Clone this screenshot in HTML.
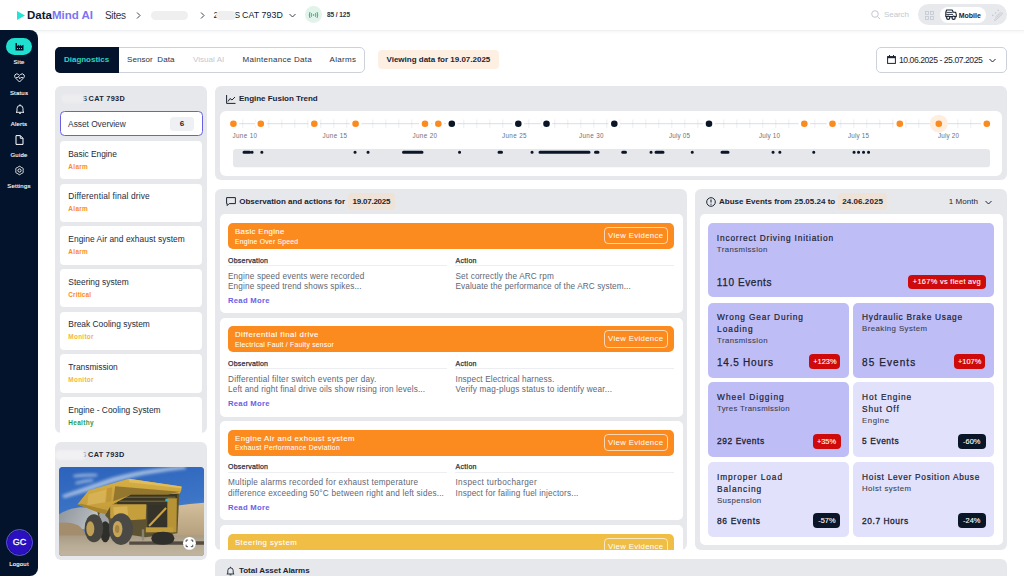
<!DOCTYPE html>
<html><head><meta charset="utf-8">
<style>
*{box-sizing:border-box;margin:0;padding:0}
html,body{width:1024px;height:576px;overflow:hidden;background:#fff;font-family:"Liberation Sans",sans-serif;color:#0e1a2e}
.a{position:absolute}
.t{position:absolute;white-space:nowrap;line-height:1}
#top{position:absolute;left:0;top:0;width:1024px;height:30.5px;background:#fff;border-bottom:1px solid #eef0f2;box-shadow:0 1px 3px rgba(20,30,50,0.05)}
#side{position:absolute;left:0;top:30px;width:38.3px;height:546px;background:#03132b;border-radius:0 8px 8px 0}
.nl{position:absolute;left:0;width:38px;text-align:center;color:#fff;font-size:6px;line-height:1;letter-spacing:0.2px;-webkit-text-stroke:0.12px #fff}
.panel{position:absolute;background:#e7e8ec;border-radius:6px;overflow:hidden}
.card{position:absolute;background:#fff;border-radius:4px}
.lc{position:absolute;left:5px;width:142px;height:38.5px;background:#fff;border-radius:4px}
.lc .n{position:absolute;left:8px;top:8.9px;font-size:8.4px;color:#222c3c;white-space:nowrap;line-height:1}
.lc .s{position:absolute;left:8px;top:22.8px;font-size:6.4px;font-weight:bold;white-space:nowrap;line-height:1}
</style></head><body>

<!-- TOP BAR -->
<div id="top">
  <svg class="a" style="left:17px;top:11px" width="8" height="9" viewBox="0 0 8 9"><path d="M0 0L8 4.5L0 9Z" fill="#22e5d6"></path></svg>
  <div class="t" style="left: 27px; top: 10px; font-size: 11.5px; font-weight: bold; letter-spacing: -0.003px;"><span style="color:#0e1a2e">Data</span><span style="color:#7b75f2">Mind AI</span></div>
  <div class="t" style="left: 105px; top: 11px; font-size: 10px; color: rgb(43, 52, 69); letter-spacing: -0.309px;">Sites</div>
  <svg class="a" style="left:136px;top:12px" width="5" height="7" viewBox="0 0 5 7"><path d="M1 0.5L4 3.5L1 6.5" fill="none" stroke="#3a4352" stroke-width="1"></path></svg>
  <div class="a" style="left:150.8px;top:10.8px;width:37.3px;height:9.2px;border-radius:5px;background:#efefef;filter:blur(0.6px)"></div>
  <svg class="a" style="left:200px;top:12px" width="5" height="7" viewBox="0 0 5 7"><path d="M1 0.5L4 3.5L1 6.5" fill="none" stroke="#3a4352" stroke-width="1"></path></svg>
  <div class="t" style="left: 213.5px; top: 11.2px; font-size: 8.8px; color: rgb(14, 26, 46); letter-spacing: -0.306px;">2</div><div class="t" style="left: 234.3px; top: 11.2px; font-size: 8.8px; color: rgb(14, 26, 46); letter-spacing: -1.275px;">S</div><div class="a" style="left:216.4px;top:10.8px;width:20px;height:9.4px;border-radius:5px;background:#efefef;filter:blur(0.6px)"></div>
  <div class="t" style="left: 242.1px; top: 11.2px; font-size: 8.8px; color: rgb(14, 26, 46); letter-spacing: 0.062px;">CAT 793D</div>
  <svg class="a" style="left:289px;top:13px" width="7" height="5" viewBox="0 0 7 5"><path d="M0.5 1L3.5 4L6.5 1" fill="none" stroke="#3a4352" stroke-width="1"></path></svg>
  <div class="a" style="left:305px;top:6.4px;width:17px;height:17px;border-radius:50%;background:#e1f3ea"></div>
  <svg class="a" style="left:308px;top:11px" width="11" height="8" viewBox="0 0 11 8"><path d="M2 1Q0.5 4 2 7M9 1Q10.5 4 9 7M3.6 2.2Q2.8 4 3.6 5.8M7.4 2.2Q8.2 4 7.4 5.8" fill="none" stroke="#2aa86a" stroke-width="0.9"></path><circle cx="5.5" cy="4" r="0.8" fill="#2aa86a"></circle></svg>
  <div class="t" style="left: 327px; top: 11.5px; font-size: 6.5px; font-weight: bold; color: rgb(43, 52, 69); letter-spacing: -0.071px;">85 / 125</div>

  <svg class="a" style="left:871px;top:10px" width="10" height="10" viewBox="0 0 10 10"><circle cx="4" cy="4" r="3.3" fill="none" stroke="#c3c8d0" stroke-width="1"></circle><path d="M6.5 6.5L9 9" stroke="#c3c8d0" stroke-width="1"></path></svg>
  <div class="t" style="left: 884px; top: 10.5px; font-size: 8px; color: rgb(195, 200, 208); letter-spacing: -0.072px;">Search</div>
  <div class="a" style="left:918px;top:4px;width:89px;height:21px;border-radius:11px;background:#e8e9ed"></div>
  <svg class="a" style="left:925px;top:10.5px" width="9" height="9" viewBox="0 0 9 9"><rect x="0.5" y="0.5" width="3" height="3" fill="none" stroke="#c3c8d0" stroke-width="0.8"></rect><rect x="5.5" y="0.5" width="3" height="3" fill="none" stroke="#c3c8d0" stroke-width="0.8"></rect><rect x="0.5" y="5.5" width="3" height="3" fill="none" stroke="#c3c8d0" stroke-width="0.8"></rect><rect x="5.5" y="5.5" width="3" height="3" fill="none" stroke="#c3c8d0" stroke-width="0.8"></rect></svg>
  <div class="a" style="left:940px;top:6.5px;width:46px;height:16.5px;border-radius:8px;background:#fff"></div>
  <svg class="a" style="left:945px;top:9.3px" width="12" height="11" viewBox="0 0 12 11"><path d="M0.8 3.2L1.6 1H7.2L8.2 3.2H10.6L11.3 5.6V7.6H0.8Z" fill="none" stroke="#1b2433" stroke-width="1.1" stroke-linejoin="round"></path><path d="M1.5 3.4H7.5M1.2 5.4H8" stroke="#1b2433" stroke-width="0.9"></path><circle cx="3.2" cy="8.7" r="1.6" fill="#fff" stroke="#1b2433" stroke-width="1.2"></circle><circle cx="8.6" cy="8.7" r="1.6" fill="#fff" stroke="#1b2433" stroke-width="1.2"></circle></svg>
  <div class="t" style="left: 958.8px; top: 11.6px; font-size: 7px; font-weight: bold; color: rgb(27, 36, 51); letter-spacing: -0.034px;">Mobile</div>
  <svg class="a" style="left:990.5px;top:9.3px" width="12" height="12" viewBox="0 0 12 12"><path d="M3.2 11L10.8 3.6Q11.6 4.2 11.4 5L4.2 11.6Q3.6 11.8 3.2 11Z" fill="none" stroke="#c3c8d0" stroke-width="0.8"></path><path d="M4 8.4L9.5 3M6 6.8L7 7.8M7.6 5.2L8.4 6" stroke="#c3c8d0" stroke-width="0.7"></path><circle cx="1.8" cy="6.4" r="0.8" fill="#c3c8d0"></circle><circle cx="4.6" cy="4" r="0.8" fill="#c3c8d0"></circle><circle cx="7.2" cy="1.2" r="0.8" fill="#c3c8d0"></circle></svg>
</div>

<!-- SIDEBAR -->
<div id="side"></div>
<div class="a" style="left:6px;top:38px;width:26px;height:17px;border-radius:9px;background:#1fe0cf"></div>
<svg class="a" style="left:14.5px;top:42px" width="9" height="9" viewBox="0 0 9 9"><path d="M0.5 8.5V1H2V4L4 2.8V4L6 2.8V4L8.5 2.8V8.5Z" fill="#03132b"></path><rect x="2" y="6" width="1" height="1" fill="#1fe0cf"></rect><rect x="4" y="6" width="1" height="1" fill="#1fe0cf"></rect><rect x="6" y="6" width="1" height="1" fill="#1fe0cf"></rect></svg>
<div class="nl" style="top:58.8px">Site</div>
<svg class="a" style="left:14px;top:72.5px" width="11" height="10" viewBox="0 0 11 10"><path d="M5.5 9L1.3 4.8Q0 3.2 1 1.8Q2.6 0 4.3 1.4L5.5 2.4L6.7 1.4Q8.4 0 10 1.8Q11 3.2 9.7 4.8Z" fill="none" stroke="#fff" stroke-width="0.9"></path><path d="M2 4.5H3.8L4.6 3.3L5.8 5.8L6.8 4.5H9" fill="none" stroke="#fff" stroke-width="0.8"></path></svg>
<div class="nl" style="top:89.8px">Status</div>
<svg class="a" style="left:14.5px;top:104px" width="10" height="10" viewBox="0 0 10 10"><path d="M2 7.5V4.5Q2 1.5 5 1.5Q8 1.5 8 4.5V7.5L9 8.3H1Z" fill="none" stroke="#fff" stroke-width="0.9"></path><path d="M4 9.3H6" stroke="#fff" stroke-width="0.9"></path><path d="M5 0.3V1.5" stroke="#fff" stroke-width="0.9"></path></svg>
<div class="nl" style="top:120.8px">Alerts</div>
<svg class="a" style="left:15px;top:135px" width="9" height="10" viewBox="0 0 9 10"><path d="M1 0.6H5.3L8 3.3V9.4H1Z" fill="none" stroke="#fff" stroke-width="1"></path><path d="M5.3 0.6V3.3H8" fill="none" stroke="#fff" stroke-width="0.9"></path></svg>
<div class="nl" style="top:151.8px">Guide</div>
<svg class="a" style="left:13.7px;top:165px" width="11" height="11" viewBox="0 0 11 11"><path d="M6.38 1.68Q5.50 0.90 4.62 1.68Q3.75 2.47 2.63 2.83Q1.52 3.20 1.76 4.35Q2.00 5.50 1.76 6.65Q1.52 7.80 2.63 8.17Q3.75 8.53 4.62 9.32Q5.50 10.10 6.37 9.32Q7.25 8.53 8.37 8.17Q9.48 7.80 9.24 6.65Q9.00 5.50 9.24 4.35Q9.48 3.20 8.37 2.83Q7.25 2.47 6.38 1.68Z" fill="none" stroke="#fff" stroke-width="0.9"></path><circle cx="5.5" cy="5.5" r="1.6" fill="none" stroke="#fff" stroke-width="0.9"></circle></svg>
<div class="nl" style="top:182.8px">Settings</div>
<div class="a" style="left:5.9px;top:528.7px;width:27px;height:27px;border-radius:50%;background:#2a10c0;border:1px solid #5d54e8;box-shadow:inset 0 0 0 0.8px #1c1a6a"></div>
<div class="t" style="left: 5.9px; top: 538.2px; width: 27px; text-align: center; font-size: 9px; color: rgb(255, 255, 255); -webkit-text-stroke: 0.3px rgb(255, 255, 255); letter-spacing: 0px;">GC</div>
<div class="nl" style="top:560.5px">Logout</div>

<!-- TABS -->
<div class="a" style="left:55px;top:47px;width:310px;height:25.5px;border:1px solid #cdd2da;border-radius:5px;background:#fff"></div>
<div class="a" style="left:55px;top:47px;width:63.5px;height:25.5px;border-radius:5px 0 0 5px;background:#03132b"></div>
<div class="t" style="left: 64px; top: 56px; font-size: 8px; font-weight: bold; color: rgb(42, 211, 195); letter-spacing: -0.024px;">Diagnostics</div>
<div class="t" style="left: 127px; top: 56px; font-size: 8px; color: rgb(43, 52, 69); letter-spacing: 0.072px;">Sensor&nbsp; Data</div>
<div class="t" style="left: 193px; top: 56px; font-size: 8px; color: rgb(195, 200, 208); letter-spacing: 0.039px;">Visual AI</div>
<div class="t" style="left: 242.5px; top: 56px; font-size: 8px; color: rgb(43, 52, 69); letter-spacing: 0.284px;">Maintenance Data</div>
<div class="t" style="left: 329.5px; top: 56px; font-size: 8px; color: rgb(43, 52, 69); letter-spacing: 0.342px;">Alarms</div>
<div class="a" style="left:378px;top:50px;width:121px;height:18.5px;border-radius:4px;background:#fdf0e3"></div>
<div class="t" style="left: 386.5px; top: 56px; font-size: 8px; font-weight: bold; color: rgb(27, 36, 51); letter-spacing: -0.004px;">Viewing data for 19.07.2025</div>

<div class="a" style="left:876px;top:47px;width:131px;height:25.5px;border:1px solid #cdd2da;border-radius:5px;background:#fff"></div>
<svg class="a" style="left:886.5px;top:55px" width="9" height="9" viewBox="0 0 9 9"><rect x="0.6" y="1.6" width="7.8" height="6.8" fill="none" stroke="#1b2433" stroke-width="1"></rect><rect x="0.6" y="1.6" width="7.8" height="1.6" fill="#1b2433"></rect><path d="M2.5 0V2M6.5 0V2" stroke="#1b2433" stroke-width="1"></path></svg>
<div class="t" style="left: 899px; top: 56px; font-size: 8.6px; color: rgb(27, 36, 51); letter-spacing: -0.451px;">10.06.2025 - 25.07.2025</div>
<svg class="a" style="left:988.5px;top:58px" width="7" height="5" viewBox="0 0 7 5"><path d="M0.5 1L3.5 4L6.5 1" fill="none" stroke="#1b2433" stroke-width="1"></path></svg>

<!-- LEFT PANEL -->
<div class="panel" style="left:55.3px;top:85.5px;width:151.3px;height:347px">
  <div class="t" style="left: 27px; top: 9.1px; font-size: 7.3px; font-weight: bold; color: rgb(27, 36, 51); letter-spacing: -0.275px;">S</div><div class="a" style="left:5.9px;top:8px;width:24.3px;height:9.7px;border-radius:5px;background:#ededef;filter:blur(0.8px)"></div>
  <div class="t" style="left: 33.25px; top: 9.1px; font-size: 7.3px; font-weight: bold; color: rgb(27, 36, 51); letter-spacing: 0.316px;">CAT 793D</div>
  <div class="a" style="left:4.5px;top:25.6px;width:143px;height:25.3px;border:1.3px solid #6760e2;border-radius:4.5px;background:#fff"></div>
  <div class="t" style="left: 12.8px; top: 34.2px; font-size: 8.4px; color: rgb(43, 52, 69); letter-spacing: -0.037px;">Asset Overview</div>
  <div class="a" style="left:114.8px;top:31px;width:23.8px;height:14.8px;border-radius:3.5px;background:#eff0f3"></div>
  <div class="t" style="left: 114.8px; top: 34.6px; width: 23.8px; text-align: center; font-size: 8px; font-weight: bold; color: rgb(27, 36, 51); letter-spacing: 0px;">6</div>
  <div class="lc" style="top:55.3px"><div class="n" style="letter-spacing: -0.026px;">Basic Engine</div><div class="s" style="color: rgb(251, 138, 34); letter-spacing: 0.344px;">Alarm</div></div>
  <div class="lc" style="top:98.0px"><div class="n" style="letter-spacing: 0.149px;">Differential final drive</div><div class="s" style="color: rgb(251, 138, 34); letter-spacing: 0.344px;">Alarm</div></div>
  <div class="lc" style="top:140.7px"><div class="n" style="letter-spacing: 0.054px;">Engine Air and exhaust system</div><div class="s" style="color: rgb(251, 138, 34); letter-spacing: 0.344px;">Alarm</div></div>
  <div class="lc" style="top:183.4px"><div class="n" style="letter-spacing: 0.032px;">Steering system</div><div class="s" style="color: rgb(251, 138, 34); letter-spacing: 0.154px;">Critical</div></div>
  <div class="lc" style="top:226.1px"><div class="n" style="letter-spacing: 0.002px;">Break Cooling system</div><div class="s" style="color: rgb(241, 183, 58); letter-spacing: 0.302px;">Monitor</div></div>
  <div class="lc" style="top:268.8px"><div class="n" style="letter-spacing: 0px;">Transmission</div><div class="s" style="color: rgb(241, 183, 58); letter-spacing: 0.302px;">Monitor</div></div>
  <div class="lc" style="top:311.5px"><div class="n" style="letter-spacing: 0.004px;">Engine - Cooling System</div><div class="s" style="color: rgb(31, 154, 82); letter-spacing: 0.351px;">Healthy</div></div>
</div>

<!-- IMAGE PANEL -->
<div class="panel" style="left:55.3px;top:441.5px;width:151.3px;height:118px">
  <div class="t" style="left: 26px; top: 9.3px; font-size: 7.3px; font-weight: bold; color: rgb(27, 36, 51); letter-spacing: -0.275px;">S</div><div class="a" style="left:-0.3px;top:8.6px;width:31.3px;height:10px;border-radius:5px;background:#f1f1f3;filter:blur(0.8px)"></div>
  <div class="t" style="left: 32.8px; top: 9.3px; font-size: 7.3px; font-weight: bold; color: rgb(27, 36, 51); letter-spacing: 0.316px;">CAT 793D</div>
  <div class="a" id="truck" style="left:4px;top:25.5px;width:144.5px;height:88.5px;border-radius:4px;overflow:hidden;background:#3a6fc0"><svg width="145" height="89" viewBox="0 0 144.5 88.5" style="position:absolute;left:0;top:0">
<defs>
<linearGradient id="sky" x1="0" y1="0" x2="0.25" y2="1"><stop offset="0" stop-color="#2c62bb"></stop><stop offset="0.55" stop-color="#3c75c6"></stop><stop offset="1" stop-color="#6a99d2"></stop></linearGradient>
<linearGradient id="gnd" x1="0" y1="0" x2="0" y2="1"><stop offset="0" stop-color="#a89b85"></stop><stop offset="0.5" stop-color="#b8ac96"></stop><stop offset="1" stop-color="#c2b5a0"></stop></linearGradient>
<linearGradient id="hill" x1="0" y1="0" x2="0" y2="1"><stop offset="0" stop-color="#d3c09d"></stop><stop offset="1" stop-color="#b29b78"></stop></linearGradient>
<linearGradient id="mtn" x1="0" y1="0" x2="1" y2="0.3"><stop offset="0" stop-color="#8d949a"></stop><stop offset="0.7" stop-color="#aeb3b8"></stop><stop offset="1" stop-color="#d5d8da"></stop></linearGradient>
<linearGradient id="bed" x1="0" y1="0" x2="0" y2="1"><stop offset="0" stop-color="#d6ae45"></stop><stop offset="1" stop-color="#c29a3a"></stop></linearGradient>
<filter id="b1" x="-30%" y="-80%" width="160%" height="260%"><feGaussianBlur stdDeviation="1.6"></feGaussianBlur></filter>
<filter id="b2" x="-5%" y="-5%" width="110%" height="110%"><feGaussianBlur stdDeviation="0.5"></feGaussianBlur></filter>
</defs>
<rect width="144.5" height="88.5" fill="url(#sky)"></rect>
<g filter="url(#b1)" fill="#b9cde8" opacity="0.8">
<path d="M3 28Q25 20 48 12Q80 2 125 -1L127 2Q85 6 52 16Q30 24 5 31Z"></path>
<path d="M14 8Q28 6 38 7L38 9Q28 9 15 10Z"></path>
<path d="M16 15Q26 12 34 12L34 14Q26 15 17 17Z"></path>
</g>
<g filter="url(#b2)">
<path d="M0 47Q10 41 21 40Q31 40 40 44L44 62L0 62Z" fill="url(#mtn)"></path>
<path d="M117 38.6Q130 36.5 144.5 35.5L144.5 72.6L112 72.6Z" fill="url(#hill)"></path>
<path d="M0 55.5Q12 54 19 58Q25 62 27 68.5L0 68.5Z" fill="#a48d6d"></path>
<rect x="0" y="68" width="144.5" height="20.5" fill="url(#gnd)"></rect>
<path d="M70 74.2L144.5 73.8L144.5 77.3L70 77.5Z" fill="#3a3630" opacity="0.8"></path>
<!-- truck body -->
<path d="M38 44L52 39L53 60L42 60Z" fill="#5e5231"></path>
<path d="M40 47Q43 42 48 42L50 56L42 58Z" fill="#9ea3a7"></path>
<path d="M50 27L120 24L118 66L86 70L62 66L46 48Z" fill="#5d5230"></path>
<path d="M58 26.5L118 26L117 37L58 38Z" fill="#3a3628"></path>
<path d="M60 30H116M60 34H116" stroke="#b8963a" stroke-width="0.7" opacity="0.8"></path>
<path d="M51 37L87 37L86.5 52L70 53L51 51Z" fill="#c69f3c"></path>
<path d="M54 40L68 39L69 50L55 49Z" fill="#d9b65a" opacity="0.8"></path>
<path d="M88 37L108 37L108 61L88 61Z" fill="#34322c"></path>
<path d="M89 58L106 40L107.5 41.5L90.5 59.5Z" fill="#c9a33f"></path>
<path d="M108 31L117.5 31L117 65L108 65Z" fill="#b79334"></path>
<path d="M86.5 60H114V65H86.5Z" fill="#c19c3b"></path>
<rect x="106" y="31.5" width="3" height="2.5" fill="#35b9d2"></rect>
<!-- dump bed -->
<path d="M18.5 37L29.4 23.2L69.5 11.6L122 19.3L122 22.5L120.5 26.3L108 27L72 27L52 38L46.4 47L36 44Z" fill="url(#bed)"></path>
<path d="M29.5 27L47 22.5L46 35L28 38Z" fill="#dab75c" opacity="0.75"></path>
<path d="M48 21L53 20L52 34L47 35Z" fill="#bb9434" opacity="0.8"></path>
<path d="M69.5 11.6L122 19.3L122 21L70 15Z" fill="#e0bd5c"></path>
<path d="M56 19L120.5 24.5L108 27.5L72 27.5L54 34Z" fill="#8a6f2b" opacity="0.85"></path>
<path d="M18.5 37L36 44L46.4 47L48 43L22 36.5Z" fill="#a9852f"></path>
<!-- tires -->
<ellipse cx="46.1" cy="64.5" rx="5" ry="10.5" fill="#2e2d2a"></ellipse>
<ellipse cx="34.8" cy="61" rx="9.3" ry="14" fill="#46453f"></ellipse>
<ellipse cx="31.2" cy="61.4" rx="4" ry="7.4" fill="#bf9f55"></ellipse>
<ellipse cx="61.8" cy="61.8" rx="12" ry="15.8" fill="#4b4a45"></ellipse>
<ellipse cx="58.4" cy="61.8" rx="4.8" ry="8.2" fill="#c6a55a"></ellipse>
<ellipse cx="58" cy="61.8" rx="2.2" ry="4" fill="#a4843f"></ellipse>
<path d="M92 71Q92 64.5 103.6 64.5Q115 64.5 115 71Q115 77.5 103.6 77.5Q92 77.5 92 71Z" fill="#2f2e2a"></path>
<rect x="82.5" y="62" width="2.4" height="11" fill="#8e8a7a" opacity="0.85"></rect>
</g>
<circle cx="130" cy="76" r="6.4" fill="#fff"></circle>
<path d="M126.7 74.6V72.7H128.6M131.4 72.7H133.3V74.6M133.3 77.4V79.3H131.4M128.6 79.3H126.7V77.4" fill="none" stroke="#1b2433" stroke-width="0.8"></path>
</svg>


</div>
</div>

<!-- ENGINE FUSION PANEL -->
<div class="panel" style="left:215px;top:85.5px;width:791.5px;height:94px">
  <svg class="a" style="left:11.00px;top:9px" width="10" height="9" viewBox="0 0 10 9"><path d="M0.6 0V8.4H9.5" fill="none" stroke="#1b2433" stroke-width="1"></path><path d="M2 6.5L4 3.5L6 5L9 2" fill="none" stroke="#1b2433" stroke-width="1"></path></svg>
  <div class="t" style="left: 24px; top: 9px; font-size: 8px; font-weight: bold; color: rgb(27, 36, 51); letter-spacing: -0.021px;">Engine Fusion Trend</div>
  <div class="card" style="left:5.00px;top:25.7px;width:782.3px;height:64.5px;border-radius:6px"></div>
</div>

<!-- TIMELINE -->
<svg class="a" style="left:0;top:0" width="1024" height="180" viewBox="0 0 1024 180">
  <g stroke="#dfe2e7" stroke-width="0.6"><line x1="242.8" y1="119.5" x2="242.8" y2="128"></line><line x1="255.8" y1="119.5" x2="255.8" y2="128"></line><line x1="268.8" y1="119.5" x2="268.8" y2="128"></line><line x1="281.8" y1="119.5" x2="281.8" y2="128"></line><line x1="294.8" y1="119.5" x2="294.8" y2="128"></line><line x1="307.8" y1="119.5" x2="307.8" y2="128"></line><line x1="320.8" y1="119.5" x2="320.8" y2="128"></line><line x1="333.8" y1="119.5" x2="333.8" y2="128"></line><line x1="346.8" y1="119.5" x2="346.8" y2="128"></line><line x1="359.8" y1="119.5" x2="359.8" y2="128"></line><line x1="372.8" y1="119.5" x2="372.8" y2="128"></line><line x1="385.8" y1="119.5" x2="385.8" y2="128"></line><line x1="398.8" y1="119.5" x2="398.8" y2="128"></line><line x1="411.8" y1="119.5" x2="411.8" y2="128"></line><line x1="424.8" y1="119.5" x2="424.8" y2="128"></line><line x1="437.8" y1="119.5" x2="437.8" y2="128"></line><line x1="450.8" y1="119.5" x2="450.8" y2="128"></line><line x1="463.8" y1="119.5" x2="463.8" y2="128"></line><line x1="476.8" y1="119.5" x2="476.8" y2="128"></line><line x1="489.8" y1="119.5" x2="489.8" y2="128"></line><line x1="502.8" y1="119.5" x2="502.8" y2="128"></line><line x1="515.8" y1="119.5" x2="515.8" y2="128"></line><line x1="528.8" y1="119.5" x2="528.8" y2="128"></line><line x1="541.8" y1="119.5" x2="541.8" y2="128"></line><line x1="554.8" y1="119.5" x2="554.8" y2="128"></line><line x1="567.8" y1="119.5" x2="567.8" y2="128"></line><line x1="580.8" y1="119.5" x2="580.8" y2="128"></line><line x1="593.8" y1="119.5" x2="593.8" y2="128"></line><line x1="606.8" y1="119.5" x2="606.8" y2="128"></line><line x1="619.8" y1="119.5" x2="619.8" y2="128"></line><line x1="632.8" y1="119.5" x2="632.8" y2="128"></line><line x1="645.8" y1="119.5" x2="645.8" y2="128"></line><line x1="658.8" y1="119.5" x2="658.8" y2="128"></line><line x1="671.8" y1="119.5" x2="671.8" y2="128"></line><line x1="684.8" y1="119.5" x2="684.8" y2="128"></line><line x1="697.8" y1="119.5" x2="697.8" y2="128"></line><line x1="710.8" y1="119.5" x2="710.8" y2="128"></line><line x1="723.8" y1="119.5" x2="723.8" y2="128"></line><line x1="736.8" y1="119.5" x2="736.8" y2="128"></line><line x1="749.8" y1="119.5" x2="749.8" y2="128"></line><line x1="762.8" y1="119.5" x2="762.8" y2="128"></line><line x1="775.8" y1="119.5" x2="775.8" y2="128"></line><line x1="788.8" y1="119.5" x2="788.8" y2="128"></line><line x1="801.8" y1="119.5" x2="801.8" y2="128"></line><line x1="814.8" y1="119.5" x2="814.8" y2="128"></line><line x1="827.8" y1="119.5" x2="827.8" y2="128"></line><line x1="840.8" y1="119.5" x2="840.8" y2="128"></line><line x1="853.8" y1="119.5" x2="853.8" y2="128"></line><line x1="866.8" y1="119.5" x2="866.8" y2="128"></line><line x1="879.8" y1="119.5" x2="879.8" y2="128"></line><line x1="892.8" y1="119.5" x2="892.8" y2="128"></line><line x1="905.8" y1="119.5" x2="905.8" y2="128"></line><line x1="918.8" y1="119.5" x2="918.8" y2="128"></line><line x1="931.8" y1="119.5" x2="931.8" y2="128"></line><line x1="944.8" y1="119.5" x2="944.8" y2="128"></line><line x1="957.8" y1="119.5" x2="957.8" y2="128"></line><line x1="970.8" y1="119.5" x2="970.8" y2="128"></line><line x1="983.8" y1="119.5" x2="983.8" y2="128"></line></g>
  <line x1="234" y1="123.7" x2="987" y2="123.7" stroke="#cfd4dc" stroke-width="0.8"></line>
  <g fill="#fff"><circle cx="233.4" cy="123.7" r="5.8"></circle><circle cx="260.8" cy="123.7" r="5.8"></circle><circle cx="314.3" cy="123.7" r="5.8"></circle><circle cx="355.6" cy="123.7" r="5.8"></circle><circle cx="425" cy="123.7" r="5.8"></circle><circle cx="438.3" cy="123.7" r="5.8"></circle><circle cx="804.3" cy="123.7" r="5.8"></circle><circle cx="832.5" cy="123.7" r="5.8"></circle><circle cx="899.8" cy="123.7" r="5.8"></circle><circle cx="986.8" cy="123.7" r="5.8"></circle><circle cx="451.8" cy="123.7" r="5.8"></circle><circle cx="518.3" cy="123.7" r="5.8"></circle><circle cx="546.5" cy="123.7" r="5.8"></circle><circle cx="614.3" cy="123.7" r="5.8"></circle><circle cx="709" cy="123.7" r="5.8"></circle></g>
  <g fill="#fb8a1f">
    <circle cx="233.4" cy="123.7" r="3.3"></circle><circle cx="260.8" cy="123.7" r="3.3"></circle><circle cx="314.3" cy="123.7" r="3.3"></circle><circle cx="355.6" cy="123.7" r="3.3"></circle><circle cx="425" cy="123.7" r="3.3"></circle><circle cx="438.3" cy="123.7" r="3.3"></circle>
    <circle cx="804.3" cy="123.7" r="3.3"></circle><circle cx="832.5" cy="123.7" r="3.3"></circle><circle cx="899.8" cy="123.7" r="3.3"></circle><circle cx="938.8" cy="123.7" r="9" fill="#fdeedf"></circle><circle cx="938.8" cy="123.7" r="3.3"></circle><circle cx="986.8" cy="123.7" r="3.3"></circle>
  </g>
  <g fill="#0a1628">
    <circle cx="451.8" cy="123.7" r="3.3"></circle><circle cx="518.3" cy="123.7" r="3.3"></circle><circle cx="546.5" cy="123.7" r="3.3"></circle><circle cx="614.3" cy="123.7" r="3.3"></circle><circle cx="709" cy="123.7" r="3.3"></circle>
  </g>
  <rect x="233" y="149" width="757" height="18.2" rx="3" fill="#e6e7eb"></rect>
  <g stroke="#0a1628" stroke-width="3" stroke-linecap="round">
    <path d="M244 152.2H249.5M252 152.2H252.1M261.8 152.2H261.9M355 152.2H355.1M368 152.2H368.1M403.5 152.2H422M459.5 152.2H459.6M499 152.2H501.5M532 152.2H532.1M540 152.2H589M595.5 152.2H598M622.7 152.2H625.5M651 152.2H651.1M656 152.2H663M692.2 152.2H692.3M722 152.2H728M773 152.2H773.1M779.8 152.2H779.9M813.7 152.2H813.8M854 152.2H854.1M858.5 152.2H858.6M863.5 152.2H863.6M868.5 152.2H868.6"></path>
  </g>
</svg>
<div class="t" style="left: 232.5px; top: 132.5px; font-size: 6.3px; color: rgb(107, 115, 128); letter-spacing: 0.346px;">June 10</div>
<div class="t" style="left: 322.5px; top: 132.5px; font-size: 6.3px; color: rgb(107, 115, 128); letter-spacing: 0.346px;">June 15</div>
<div class="t" style="left: 412.5px; top: 132.5px; font-size: 6.3px; color: rgb(107, 115, 128); letter-spacing: 0.346px;">June 20</div>
<div class="t" style="left: 502px; top: 132.5px; font-size: 6.3px; color: rgb(107, 115, 128); letter-spacing: 0.346px;">June 25</div>
<div class="t" style="left: 579px; top: 132.5px; font-size: 6.3px; color: rgb(107, 115, 128); letter-spacing: 0.346px;">June 30</div>
<div class="t" style="left: 669px; top: 132.5px; font-size: 6.3px; color: rgb(107, 115, 128); letter-spacing: 0.174px;">July 05</div>
<div class="t" style="left: 759px; top: 132.5px; font-size: 6.3px; color: rgb(107, 115, 128); letter-spacing: 0.174px;">July 10</div>
<div class="t" style="left: 848px; top: 132.5px; font-size: 6.3px; color: rgb(107, 115, 128); letter-spacing: 0.174px;">July 15</div>
<div class="t" style="left: 938px; top: 132.5px; font-size: 6.3px; color: rgb(107, 115, 128); letter-spacing: 0.174px;">July 20</div>

<!-- P4 -->
<div class="panel" style="left:215px;top:189px;width:472px;height:360.5px">
<svg class="a" style="left:10.50px;top:8.2px" width="10" height="9.5" viewBox="0 0 10 9.5"><path d="M0.6 0.6H9.4V6.6H3.2L1.2 8.6V6.6H0.6Z" fill="none" stroke="#1b2433" stroke-width="1" stroke-linejoin="round"></path></svg>
<div class="t" style="left: 24.3px; top: 9px; font-size: 8px; font-weight: bold; color: rgb(27, 36, 51); letter-spacing: -0.017px;">Observation and actions for</div>
<div class="a" style="left:133.20px;top:4px;width:47px;height:17px;border-radius:4px;background:#efe2d6"></div>
<div class="t" style="left: 137.5px; top: 9px; font-size: 8px; font-weight: bold; color: rgb(27, 36, 51); letter-spacing: -0.227px;">19.07.2025</div>
<div class="card" style="left:5.00px;top:25.3px;width:462.6px;height:99px;border-radius:5px">
<div class="a" style="left:8px;top:8.7px;width:446px;height:26px;border-radius:5px;background:#fb8a1f"></div>
<div class="t" style="left: 15px; top: 13.8px; font-size: 7.8px; color: rgb(255, 255, 255); -webkit-text-stroke: 0.1px rgb(255, 255, 255); letter-spacing: 0.349px;">Basic Engine</div>
<div class="t" style="left: 15px; top: 24.3px; font-size: 6.8px; color: rgb(255, 255, 255); -webkit-text-stroke: 0.05px rgb(255, 255, 255); letter-spacing: 0.236px;">Engine Over Speed</div>
<div class="a" style="left:383.6px;top:12.9px;width:64.4px;height:17.2px;border-radius:4px;border:1px solid rgba(255,255,255,0.65)"></div>
<div class="t" style="left: 383.6px; top: 17.9px; width: 64.4px; text-align: center; font-size: 7.8px; color: rgb(255, 255, 255); letter-spacing: 0.333px;">View Evidence</div>
<div class="t" style="left: 8px; top: 42.3px; font-size: 7px; color: rgb(43, 52, 69); -webkit-text-stroke: 0.25px rgb(43, 52, 69); letter-spacing: 0.225px;">Observation</div>
<div class="a" style="left:8px;top:50.5px;width:219px;height:1px;background:#eceef1"></div>
<div class="t" style="left: 235.5px; top: 42.3px; font-size: 7px; color: rgb(43, 52, 69); -webkit-text-stroke: 0.25px rgb(43, 52, 69); letter-spacing: 0.306px;">Action</div>
<div class="a" style="left:235px;top:50.5px;width:219px;height:1px;background:#eceef1"></div>
<div class="t" style="left: 8px; top: 58.3px; font-size: 8.2px; color: rgb(93, 102, 117); letter-spacing: 0.161px;">Engine speed events were recorded</div>
<div class="t" style="left: 8px; top: 68.8px; font-size: 8.2px; color: rgb(93, 102, 117); letter-spacing: 0.142px;">Engine speed trend shows spikes...</div>
<div class="t" style="left: 235.5px; top: 58.3px; font-size: 8.2px; color: rgb(93, 102, 117); letter-spacing: 0.15px;">Set correctly the ARC rpm</div>
<div class="t" style="left: 235.5px; top: 68.8px; font-size: 8.2px; color: rgb(93, 102, 117); letter-spacing: 0.104px;">Evaluate the performance of the ARC system...</div>
<div class="t" style="left: 8px; top: 82.6px; font-size: 7.7px; font-weight: bold; color: rgb(106, 98, 230); letter-spacing: 0.273px;">Read More</div>
</div>
<div class="card" style="left:5.00px;top:128.6px;width:462.6px;height:99px;border-radius:5px">
<div class="a" style="left:8px;top:8.7px;width:446px;height:26px;border-radius:5px;background:#fb8a1f"></div>
<div class="t" style="left: 15px; top: 13.8px; font-size: 7.8px; color: rgb(255, 255, 255); -webkit-text-stroke: 0.1px rgb(255, 255, 255); letter-spacing: 0.464px;">Differential final drive</div>
<div class="t" style="left: 15px; top: 24.3px; font-size: 6.8px; color: rgb(255, 255, 255); -webkit-text-stroke: 0.05px rgb(255, 255, 255); letter-spacing: 0.252px;">Electrical Fault / Faulty sensor</div>
<div class="a" style="left:383.6px;top:12.9px;width:64.4px;height:17.2px;border-radius:4px;border:1px solid rgba(255,255,255,0.65)"></div>
<div class="t" style="left: 383.6px; top: 17.9px; width: 64.4px; text-align: center; font-size: 7.8px; color: rgb(255, 255, 255); letter-spacing: 0.333px;">View Evidence</div>
<div class="t" style="left: 8px; top: 42.3px; font-size: 7px; color: rgb(43, 52, 69); -webkit-text-stroke: 0.25px rgb(43, 52, 69); letter-spacing: 0.225px;">Observation</div>
<div class="a" style="left:8px;top:50.5px;width:219px;height:1px;background:#eceef1"></div>
<div class="t" style="left: 235.5px; top: 42.3px; font-size: 7px; color: rgb(43, 52, 69); -webkit-text-stroke: 0.25px rgb(43, 52, 69); letter-spacing: 0.306px;">Action</div>
<div class="a" style="left:235px;top:50.5px;width:219px;height:1px;background:#eceef1"></div>
<div class="t" style="left: 8px; top: 58.3px; font-size: 8.2px; color: rgb(93, 102, 117); letter-spacing: 0.216px;">Differential filter switch events per day.</div>
<div class="t" style="left: 8px; top: 68.8px; font-size: 8.2px; color: rgb(93, 102, 117); letter-spacing: 0.143px;">Left and right final drive oils show rising iron levels...</div>
<div class="t" style="left: 235.5px; top: 58.3px; font-size: 8.2px; color: rgb(93, 102, 117); letter-spacing: 0.122px;">Inspect Electrical harness.</div>
<div class="t" style="left: 235.5px; top: 68.8px; font-size: 8.2px; color: rgb(93, 102, 117); letter-spacing: 0.183px;">Verify mag-plugs status to identify wear...</div>
<div class="t" style="left: 8px; top: 82.6px; font-size: 7.7px; font-weight: bold; color: rgb(106, 98, 230); letter-spacing: 0.273px;">Read More</div>
</div>
<div class="card" style="left:5.00px;top:232px;width:462.6px;height:99px;border-radius:5px">
<div class="a" style="left:8px;top:8.7px;width:446px;height:26px;border-radius:5px;background:#fb8a1f"></div>
<div class="t" style="left: 15px; top: 13.8px; font-size: 7.8px; color: rgb(255, 255, 255); -webkit-text-stroke: 0.1px rgb(255, 255, 255); letter-spacing: 0.444px;">Engine Air and exhoust system</div>
<div class="t" style="left: 15px; top: 24.3px; font-size: 6.8px; color: rgb(255, 255, 255); -webkit-text-stroke: 0.05px rgb(255, 255, 255); letter-spacing: 0.325px;">Exhaust Performance Deviation</div>
<div class="a" style="left:383.6px;top:12.9px;width:64.4px;height:17.2px;border-radius:4px;border:1px solid rgba(255,255,255,0.65)"></div>
<div class="t" style="left: 383.6px; top: 17.9px; width: 64.4px; text-align: center; font-size: 7.8px; color: rgb(255, 255, 255); letter-spacing: 0.333px;">View Evidence</div>
<div class="t" style="left: 8px; top: 42.3px; font-size: 7px; color: rgb(43, 52, 69); -webkit-text-stroke: 0.25px rgb(43, 52, 69); letter-spacing: 0.225px;">Observation</div>
<div class="a" style="left:8px;top:50.5px;width:219px;height:1px;background:#eceef1"></div>
<div class="t" style="left: 235.5px; top: 42.3px; font-size: 7px; color: rgb(43, 52, 69); -webkit-text-stroke: 0.25px rgb(43, 52, 69); letter-spacing: 0.306px;">Action</div>
<div class="a" style="left:235px;top:50.5px;width:219px;height:1px;background:#eceef1"></div>
<div class="t" style="left: 8px; top: 58.3px; font-size: 8.2px; color: rgb(93, 102, 117); letter-spacing: 0.237px;">Multiple alarms recorded for exhaust temperature</div>
<div class="t" style="left: 8px; top: 68.8px; font-size: 8.2px; color: rgb(93, 102, 117); letter-spacing: 0.199px;">difference exceeding 50°C between right and left sides...</div>
<div class="t" style="left: 235.5px; top: 58.3px; font-size: 8.2px; color: rgb(93, 102, 117); letter-spacing: 0.321px;">Inspect turbocharger</div>
<div class="t" style="left: 235.5px; top: 68.8px; font-size: 8.2px; color: rgb(93, 102, 117); letter-spacing: 0.165px;">Inspect for failing fuel injectors...</div>
<div class="t" style="left: 8px; top: 82.6px; font-size: 7.7px; font-weight: bold; color: rgb(106, 98, 230); letter-spacing: 0.273px;">Read More</div>
</div>
<div class="card" style="left:5.00px;top:336px;width:462.6px;height:99px;border-radius:5px">
<div class="a" style="left:8px;top:8.7px;width:446px;height:26px;border-radius:5px;background:#f0bd45"></div>
<div class="t" style="left: 15px; top: 13.8px; font-size: 7.8px; color: rgb(255, 255, 255); -webkit-text-stroke: 0.1px rgb(255, 255, 255); letter-spacing: 0.414px;">Steering system</div>
<div class="a" style="left:383.6px;top:12.9px;width:64.4px;height:17.2px;border-radius:4px;border:1px solid rgba(255,255,255,0.65)"></div>
<div class="t" style="left: 383.6px; top: 17.9px; width: 64.4px; text-align: center; font-size: 7.8px; color: rgb(255, 255, 255); letter-spacing: 0.333px;">View Evidence</div>
</div>
</div>
<div class="panel" style="left:695px;top:189px;width:312px;height:361px">
<svg class="a" style="left:10.50px;top:7.8px" width="10" height="10" viewBox="0 0 10 10"><circle cx="5" cy="5" r="4.3" fill="none" stroke="#1b2433" stroke-width="1"></circle><path d="M5 2.6V5.6" stroke="#1b2433" stroke-width="1.1"></path><circle cx="5" cy="7.2" r="0.6" fill="#1b2433"></circle></svg>
<div class="t" style="left: 24px; top: 9px; font-size: 8px; font-weight: bold; color: rgb(27, 36, 51); letter-spacing: 0.005px;">Abuse Events from 25.05.24 to</div>
<div class="a" style="left:142.90px;top:4.2px;width:49.4px;height:16.8px;border-radius:4px;background:#efe2d6"></div>
<div class="t" style="left: 147.2px; top: 9px; font-size: 8px; font-weight: bold; color: rgb(27, 36, 51); letter-spacing: 0.073px;">24.06.2025</div>
<div class="t" style="left: 253.8px; top: 9px; font-size: 8px; color: rgb(27, 36, 51); letter-spacing: 0.049px;">1 Month</div>
<svg class="a" style="left:290.00px;top:10.5px" width="7" height="5" viewBox="0 0 7 5"><path d="M0.5 1L3.5 4L6.5 1" fill="none" stroke="#1b2433" stroke-width="1"></path></svg>
<div class="card" style="left:5.00px;top:25.3px;width:302.6px;height:330.8px;border-radius:5px"></div>
</div>
<div class="a" style="left:708.2px;top:223px;width:285.8px;height:74.4px;border-radius:5px;background:#bfbdf6"></div>
<div class="t" style="left: 716.8px; top: 233.86px; font-size: 8.3px; color: rgb(27, 36, 51); -webkit-text-stroke: 0.2px rgb(27, 36, 51); letter-spacing: 0.837px;">Incorrect Driving Initiation</div>
<div class="t" style="left: 716.8px; top: 245.69px; font-size: 7.8px; color: rgb(59, 67, 83); -webkit-text-stroke: 0.1px rgb(59, 67, 83); letter-spacing: 0.411px;">Transmission</div>
<div class="t" style="left: 716.8px; top: 278px; font-size: 10px; color: rgb(27, 36, 51); -webkit-text-stroke: 0.25px rgb(27, 36, 51); letter-spacing: 0.6px;">110 Events</div>
<div class="a" style="left:908.2px;top:274.8px;width:77.4px;height:14.7px;border-radius:4px;background:#cf0a0a"></div>
<div class="t" style="left: 908.2px; top: 278.4px; width: 77.4px; text-align: center; font-size: 7.4px; color: rgb(255, 255, 255); -webkit-text-stroke: 0.1px rgb(255, 255, 255); letter-spacing: 0.303px;">+167% vs fleet avg</div>
<div class="a" style="left:708.2px;top:302.5px;width:140.8px;height:75px;border-radius:5px;background:#bfbdf6"></div>
<div class="t" style="left: 717px; top: 313.36px; font-size: 8.3px; color: rgb(27, 36, 51); -webkit-text-stroke: 0.2px rgb(27, 36, 51); letter-spacing: 0.881px;">Wrong Gear During</div>
<div class="t" style="left: 717px; top: 325.16px; font-size: 8.3px; color: rgb(27, 36, 51); -webkit-text-stroke: 0.2px rgb(27, 36, 51); letter-spacing: 1.011px;">Loading</div>
<div class="t" style="left: 717px; top: 336.99px; font-size: 7.8px; color: rgb(59, 67, 83); -webkit-text-stroke: 0.1px rgb(59, 67, 83); letter-spacing: 0.411px;">Transmission</div>
<div class="t" style="left: 717px; top: 357.5px; font-size: 10px; color: rgb(27, 36, 51); -webkit-text-stroke: 0.25px rgb(27, 36, 51); letter-spacing: 0.775px;">14.5 Hours</div>
<div class="a" style="left:809.3px;top:354.4px;width:31.1px;height:14.8px;border-radius:4px;background:#cf0a0a"></div>
<div class="t" style="left: 809.3px; top: 358px; width: 31.1px; text-align: center; font-size: 7.4px; color: rgb(255, 255, 255); -webkit-text-stroke: 0.1px rgb(255, 255, 255); letter-spacing: 0px;">+123%</div>
<div class="a" style="left:853.3px;top:302.5px;width:140.7px;height:75px;border-radius:5px;background:#bfbdf6"></div>
<div class="t" style="left: 862.1px; top: 313.36px; font-size: 8.3px; color: rgb(27, 36, 51); -webkit-text-stroke: 0.2px rgb(27, 36, 51); letter-spacing: 0.757px;">Hydraulic Brake Usage</div>
<div class="t" style="left: 862.1px; top: 325.19px; font-size: 7.8px; color: rgb(59, 67, 83); -webkit-text-stroke: 0.1px rgb(59, 67, 83); letter-spacing: 0.433px;">Breaking System</div>
<div class="t" style="left: 862.1px; top: 357.5px; font-size: 10px; color: rgb(27, 36, 51); -webkit-text-stroke: 0.25px rgb(27, 36, 51); letter-spacing: 1.077px;">85 Events</div>
<div class="a" style="left:954px;top:354.4px;width:31.3px;height:15px;border-radius:4px;background:#cf0a0a"></div>
<div class="t" style="left: 954px; top: 358.1px; width: 31.3px; text-align: center; font-size: 7.4px; color: rgb(255, 255, 255); -webkit-text-stroke: 0.1px rgb(255, 255, 255); letter-spacing: 0px;">+107%</div>
<div class="a" style="left:708.2px;top:382.4px;width:140.8px;height:74.2px;border-radius:5px;background:#bfbdf6"></div>
<div class="t" style="left: 717px; top: 393.26px; font-size: 8.3px; color: rgb(27, 36, 51); -webkit-text-stroke: 0.2px rgb(27, 36, 51); letter-spacing: 1.061px;">Wheel Digging</div>
<div class="t" style="left: 717px; top: 405.09px; font-size: 7.8px; color: rgb(59, 67, 83); -webkit-text-stroke: 0.1px rgb(59, 67, 83); letter-spacing: 0.313px;">Tyres Transmission</div>
<div class="t" style="left: 717px; top: 437.49px; font-size: 8.4px; color: rgb(27, 36, 51); -webkit-text-stroke: 0.3px rgb(27, 36, 51); letter-spacing: 0.588px;">292 Events</div>
<div class="a" style="left:812.5px;top:434.4px;width:28px;height:14.4px;border-radius:4px;background:#cf0a0a"></div>
<div class="t" style="left: 812.5px; top: 437.8px; width: 28px; text-align: center; font-size: 7.4px; color: rgb(255, 255, 255); -webkit-text-stroke: 0.1px rgb(255, 255, 255); letter-spacing: 0px;">+35%</div>
<div class="a" style="left:853.3px;top:382.4px;width:140.7px;height:74.2px;border-radius:5px;background:#e2e1fb"></div>
<div class="t" style="left: 862.1px; top: 393.26px; font-size: 8.3px; color: rgb(27, 36, 51); -webkit-text-stroke: 0.2px rgb(27, 36, 51); letter-spacing: 0.893px;">Hot Engine</div>
<div class="t" style="left: 862.1px; top: 405.06px; font-size: 8.3px; color: rgb(27, 36, 51); -webkit-text-stroke: 0.2px rgb(27, 36, 51); letter-spacing: 0.9px;">Shut Off</div>
<div class="t" style="left: 862.1px; top: 416.89px; font-size: 7.8px; color: rgb(59, 67, 83); -webkit-text-stroke: 0.1px rgb(59, 67, 83); letter-spacing: 0.544px;">Engine</div>
<div class="t" style="left: 862.1px; top: 437.49px; font-size: 8.4px; color: rgb(27, 36, 51); -webkit-text-stroke: 0.3px rgb(27, 36, 51); letter-spacing: 0.572px;">5 Events</div>
<div class="a" style="left:958px;top:434px;width:27.5px;height:14.75px;border-radius:4px;background:#0a1628"></div>
<div class="t" style="left: 958px; top: 437.6px; width: 27.5px; text-align: center; font-size: 7.4px; color: rgb(255, 255, 255); -webkit-text-stroke: 0.1px rgb(255, 255, 255); letter-spacing: 0px;">-60%</div>
<div class="a" style="left:708.2px;top:462.2px;width:140.8px;height:74.4px;border-radius:5px;background:#e2e1fb"></div>
<div class="t" style="left: 717px; top: 473.06px; font-size: 8.3px; color: rgb(27, 36, 51); -webkit-text-stroke: 0.2px rgb(27, 36, 51); letter-spacing: 0.919px;">Improper Load</div>
<div class="t" style="left: 717px; top: 484.86px; font-size: 8.3px; color: rgb(27, 36, 51); -webkit-text-stroke: 0.2px rgb(27, 36, 51); letter-spacing: 0.968px;">Balancing</div>
<div class="t" style="left: 717px; top: 496.69px; font-size: 7.8px; color: rgb(59, 67, 83); -webkit-text-stroke: 0.1px rgb(59, 67, 83); letter-spacing: 0.383px;">Suspension</div>
<div class="t" style="left: 717px; top: 517.29px; font-size: 8.4px; color: rgb(27, 36, 51); -webkit-text-stroke: 0.3px rgb(27, 36, 51); letter-spacing: 0.706px;">86 Events</div>
<div class="a" style="left:813.2px;top:513.4px;width:27.3px;height:15px;border-radius:4px;background:#0a1628"></div>
<div class="t" style="left: 813.2px; top: 517.1px; width: 27.3px; text-align: center; font-size: 7.4px; color: rgb(255, 255, 255); -webkit-text-stroke: 0.1px rgb(255, 255, 255); letter-spacing: 0px;">-57%</div>
<div class="a" style="left:853.3px;top:462.2px;width:140.7px;height:74.4px;border-radius:5px;background:#e2e1fb"></div>
<div class="t" style="left: 862.1px; top: 473.06px; font-size: 8.3px; color: rgb(27, 36, 51); -webkit-text-stroke: 0.2px rgb(27, 36, 51); letter-spacing: 0.723px;">Hoist Lever Position Abuse</div>
<div class="t" style="left: 862.1px; top: 484.89px; font-size: 7.8px; color: rgb(59, 67, 83); -webkit-text-stroke: 0.1px rgb(59, 67, 83); letter-spacing: 0.398px;">Hoist system</div>
<div class="t" style="left: 862.1px; top: 517.29px; font-size: 8.4px; color: rgb(27, 36, 51); -webkit-text-stroke: 0.3px rgb(27, 36, 51); letter-spacing: 0.559px;">20.7 Hours</div>
<div class="a" style="left:958px;top:513.4px;width:27.5px;height:15px;border-radius:4px;background:#0a1628"></div>
<div class="t" style="left: 958px; top: 517.1px; width: 27.5px; text-align: center; font-size: 7.4px; color: rgb(255, 255, 255); -webkit-text-stroke: 0.1px rgb(255, 255, 255); letter-spacing: 0px;">-24%</div>
<div class="panel" style="left:215px;top:558.5px;width:791.5px;height:40px">
<svg class="a" style="left:11.00px;top:7.5px" width="9" height="10" viewBox="0 0 10 10"><path d="M2 7.5V4.5Q2 1.5 5 1.5Q8 1.5 8 4.5V7.5L9 8.3H1Z" fill="none" stroke="#1b2433" stroke-width="1"></path><path d="M4 9.3H6M5 0.3V1.5" stroke="#1b2433" stroke-width="1"></path></svg>
<div class="t" style="left: 24px; top: 8.5px; font-size: 8px; font-weight: bold; color: rgb(27, 36, 51); letter-spacing: -0.04px;">Total Asset Alarms</div>
</div>
<!-- /P4 -->

</body></html>
